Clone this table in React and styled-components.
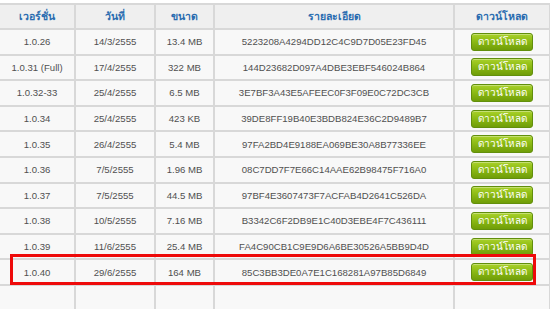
import styled, { createGlobalStyle } from 'styled-components';

const GlobalStyle = createGlobalStyle`
  html, body {
    margin: 0;
    padding: 0;
    background: #ffffff;
    overflow: hidden;
  }
  body {
    font-family: 'Liberation Sans', 'Noto Sans', 'DejaVu Sans', sans-serif;
  }
`;

const Page = styled.div`
  position: relative;
  width: 550px;
  height: 309px;
  overflow: hidden;
  padding-top: 3px;
  box-sizing: border-box;
`;

const Table = styled.table`
  border-collapse: collapse;
  margin-left: -2px;
  width: 551px;
  table-layout: fixed;
  font-size: 9.6px;
  color: #505050;
`;

const Head = styled.th`
  background: #efefef;
  border: 2px solid #d8d8d8;
  color: #2a6cb0;
  font-weight: bold;
  font-size: 10.5px;
  height: 23px;
  padding: 0;
  text-align: center;
`;

const Cell = styled.td`
  background: #f8f8f8;
  border: 2px solid #d8d8d8;
  height: 23.6px;
  padding: 0;
  text-align: center;
  white-space: nowrap;
`;

const Button = styled.button`
  display: inline-flex;
  align-items: center;
  justify-content: center;
  width: 62px;
  height: 18px;
  padding: 0 0 1px;
  border: 1px solid #628f0c;
  border-radius: 3px;
  background: linear-gradient(#a9d12a 0%, #8dbb14 45%, #6f9d08 100%);
  box-shadow: inset 0 1px 0 rgba(255, 255, 255, 0.35);
  color: #ffffff;
  font-family: inherit;
  font-size: 10px;
  cursor: pointer;
`;

const Highlight = styled.div`
  position: absolute;
  left: 10px;
  top: 254px;
  width: 526px;
  height: 31px;
  border: 3.5px solid #ee0a0a;
  box-sizing: border-box;
  pointer-events: none;
`;

const cols = [76, 80, 59, 240, 96];

const rows = [
  ['1.0.26', '14/3/2555', '13.4 MB', '5223208A4294DD12C4C9D7D05E23FD45'],
  ['1.0.31 (Full)', '17/4/2555', '322 MB', '144D23682D097A4DBE3EBF546024B864'],
  ['1.0.32-33', '25/4/2555', '6.5 MB', '3E7BF3A43E5AFEEC0F3F09E0C72DC3CB'],
  ['1.0.34', '25/4/2555', '423 KB', '39DE8FF19B40E3BDB824E36C2D9489B7'],
  ['1.0.35', '26/4/2555', '5.4 MB', '97FA2BD4E9188EA069BE30A8B77336EE'],
  ['1.0.36', '7/5/2555', '1.96 MB', '08C7DD7F7E66C14AAE62B98475F716A0'],
  ['1.0.37', '7/5/2555', '44.5 MB', '97BF4E3607473F7ACFAB4D2641C526DA'],
  ['1.0.38', '10/5/2555', '7.16 MB', 'B3342C6F2DB9E1C40D3EBE4F7C436111'],
  ['1.0.39', '11/6/2555', '25.4 MB', 'FA4C90CB1C9E9D6A6BE30526A5BB9D4D'],
  ['1.0.40', '29/6/2555', '164 MB', '85C3BB3DE0A7E1C168281A97B85D6849'],
];

export default function App() {
  return (
    <Page>
      <GlobalStyle />
      <Table>
        <colgroup>
          {cols.map((w, i) => (
            <col key={i} style={{ width: w }} />
          ))}
        </colgroup>
        <thead>
          <tr>
            <Head>เวอร์ชั่น</Head>
            <Head>วันที่</Head>
            <Head>ขนาด</Head>
            <Head>รายละเอียด</Head>
            <Head>ดาวน์โหลด</Head>
          </tr>
        </thead>
        <tbody>
          {rows.map((r) => (
            <tr key={r[0]}>
              {r.map((v, i) => (
                <Cell key={i}>{v}</Cell>
              ))}
              <Cell>
                <Button>ดาวน์โหลด</Button>
              </Cell>
            </tr>
          ))}
          <tr>
            <Cell />
            <Cell />
            <Cell />
            <Cell />
            <Cell />
          </tr>
        </tbody>
      </Table>
      <Highlight />
    </Page>
  );
}
